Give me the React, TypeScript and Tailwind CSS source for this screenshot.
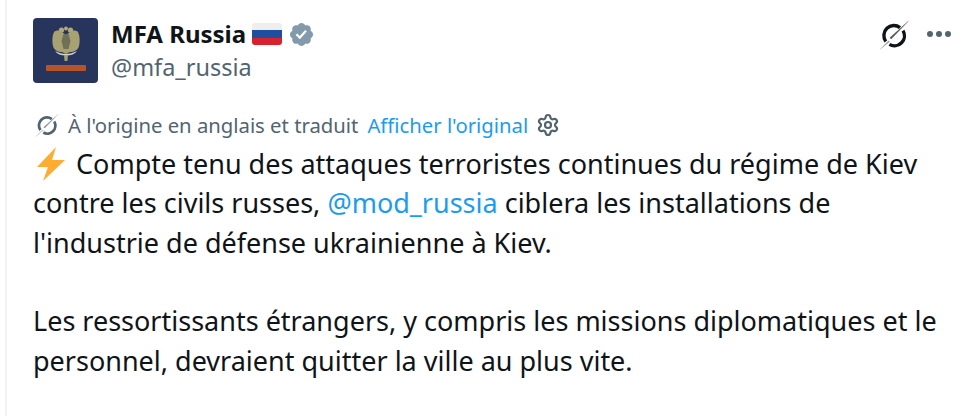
import { Settings } from "lucide-react";

function GrokIcon({ className }: { className: string }) {
  return (
    <svg className={className} viewBox="0 0 30 30" fill="none">
      <path d="M21 7.6A10 10 0 0 0 6.8 21.4" stroke="currentColor" strokeWidth="3.4" />
      <path d="M24 10.6A10 10 0 0 1 10.4 24.4" stroke="currentColor" strokeWidth="3.4" />
      <path d="M29.5.8 10.6 17.8l1.6 1.4L29.7 1z" fill="currentColor" opacity="0.7" />
      <path d="M9.6 20.6.8 29.4l.4.2 9.6-7.9z" fill="currentColor" opacity="0.4" />
    </svg>
  );
}

function Avatar() {
  return (
    <div className="w-[65px] h-[65px] shrink-0 rounded-[4px] bg-[#27355c] flex flex-col items-center pt-[8px]">
      <svg className="w-[28px] h-[36px] blur-[0.6px]" viewBox="0 0 28 36">
        {/* double-headed eagle */}
        <circle cx="9.5" cy="4" r="2.6" fill="#b0aa78" />
        <circle cx="18.5" cy="4" r="2.6" fill="#b0aa78" />
        <circle cx="14" cy="2.5" r="2" fill="#b0aa78" />
        <path
          d="M14 9 10 6C8 4 4 4 2 6 0 10 0 16 1 20c1 4 5 6 9 6l4 2 4-2c4 0 8-2 9-6 1-4 1-10-1-14-2-2-6-2-8 0z"
          fill="#a8a272"
        />
        <path d="M11.5 8h5l2 7-2 8h-5l-2-8z" fill="#6f7055" />
        <path d="M3 25c4 2 7 3 11 3s7-1 11-3c-2 3-6 4.500-11 4.500S5 28 3 25z" fill="#d5d6d0" />
        <path d="M12 29h4l-.6 6h-2.800z" fill="#a8a272" />
      </svg>
      <div className="w-[40px] h-[6px] mt-[3px] rounded-[1px] bg-[#b5532a] blur-[0.5px]" />
    </div>
  );
}

function RussianFlag() {
  return (
    <svg className="w-[30px] h-[22px] mx-[6px]" viewBox="0 0 30 22">
      <defs>
        <clipPath id="flag-clip">
          <rect width="30" height="22" rx="3" />
        </clipPath>
      </defs>
      <g clipPath="url(#flag-clip)">
        <rect width="30" height="7" fill="#eeeeee" />
        <rect y="7" width="30" height="8" fill="#1f4ea1" />
        <rect y="15" width="30" height="7" fill="#d9202f" />
      </g>
    </svg>
  );
}

function VerifiedBadge() {
  return (
    <svg className="w-[27px] h-[27px]" viewBox="0 0 22 22">
      <path
        fill="#829aab"
        d="M20.396 11c-.018-.646-.215-1.275-.57-1.816-.354-.54-.852-.972-1.438-1.246.223-.607.27-1.264.14-1.897-.131-.634-.437-1.218-.882-1.687-.47-.445-1.053-.75-1.687-.882-.633-.13-1.29-.083-1.897.14-.273-.587-.704-1.086-1.245-1.44S11.647 1.62 11 1.604c-.646.017-1.273.213-1.813.568s-.969.854-1.24 1.44c-.608-.223-1.267-.272-1.902-.14-.635.13-1.22.436-1.69.882-.445.47-.749 1.055-.878 1.688-.13.633-.08 1.29.144 1.896-.587.274-1.087.705-1.443 1.245-.356.54-.555 1.17-.574 1.817.02.647.218 1.276.574 1.817.356.54.856.972 1.443 1.245-.224.606-.274 1.263-.144 1.896.13.634.433 1.218.877 1.688.47.443 1.054.747 1.687.878.633.132 1.29.084 1.897-.136.274.586.705 1.084 1.246 1.439.54.354 1.17.551 1.816.569.647-.016 1.276-.213 1.817-.567s.972-.854 1.245-1.44c.604.239 1.266.296 1.903.164.636-.132 1.22-.447 1.68-.907.46-.46.776-1.044.908-1.681s.075-1.299-.165-1.903c.586-.274 1.084-.705 1.439-1.246.354-.54.551-1.17.569-1.816z"
      />
      <path fill="#ffffff" d="M9.662 14.85l-3.429-3.428 1.293-1.302 2.072 2.072 4.4-4.794 1.347 1.246z" />
    </svg>
  );
}

function BoltIcon() {
  return (
    <svg className="w-[28px] h-[34px] shrink-0 ml-[4px]" viewBox="0 0 28 34">
      <path d="M19 0 0 20h11L6 34 28 13H15z" fill="#ffac33" />
    </svg>
  );
}

export default function App() {
  return (
    <div className="w-[980px] h-[416px] overflow-hidden bg-white text-[#0f1419] font-['Noto_Sans','Open_Sans',sans-serif]">
      <div className="ml-[5px] h-full border-l-2 border-[#eff3f4] pl-[26px] pr-[29px] pt-[18px]">
        {/* Header */}
        <div className="flex items-start">
          <Avatar />
          <div className="ml-[13px] flex-1">
            <div className="flex items-center h-[32px]">
              <span className="text-[24px] leading-[32px] font-bold">MFA Russia</span>
              <RussianFlag />
              <VerifiedBadge />
            </div>
            <div className="text-[23.5px] leading-[32px] mt-[1px] text-[#536471]">@mfa_russia</div>
          </div>
          <div className="flex items-start gap-[18px]">
            <GrokIcon className="w-[30px] h-[30px] mt-[2px] text-[#0f1419]" />
            <div className="flex gap-[3px] mt-[13px]">
              <span className="w-[6px] h-[6px] rounded-full bg-[#536471]" />
              <span className="w-[6px] h-[6px] rounded-full bg-[#536471]" />
              <span className="w-[6px] h-[6px] rounded-full bg-[#536471]" />
            </div>
          </div>
        </div>

        {/* Translation note */}
        <div className="flex items-center h-[24px] mt-[30px] text-[20.3px] leading-[24px]">
          <GrokIcon className="w-[24px] h-[24px] ml-[2px] mr-[9px] text-[#536471]" />
          <span className="text-[#536471]">À l'origine en anglais et traduit</span>
          <span className="ml-[9px] text-[#1d9bf0]">Afficher l'original</span>
          <Settings className="ml-[8px] w-[24px] h-[24px] text-[#536471]" strokeWidth={2.2} />
        </div>

        {/* Tweet body */}
        <div className="mt-[7px] text-[27px] leading-[39.4px]">
          <div className="flex items-center">
            <BoltIcon />
            <span className="ml-[11px]">Compte tenu des attaques terroristes continues du régime de Kiev</span>
          </div>
          <div>
            contre les civils russes, <span className="text-[#1d9bf0]">@mod_russia</span> ciblera les installations de
          </div>
          <div>l'industrie de défense ukrainienne à Kiev.</div>
          <div className="h-[39px]" />
          <div>Les ressortissants étrangers, y compris les missions diplomatiques et le</div>
          <div>personnel, devraient quitter la ville au plus vite.</div>
        </div>
      </div>
    </div>
  );
}
